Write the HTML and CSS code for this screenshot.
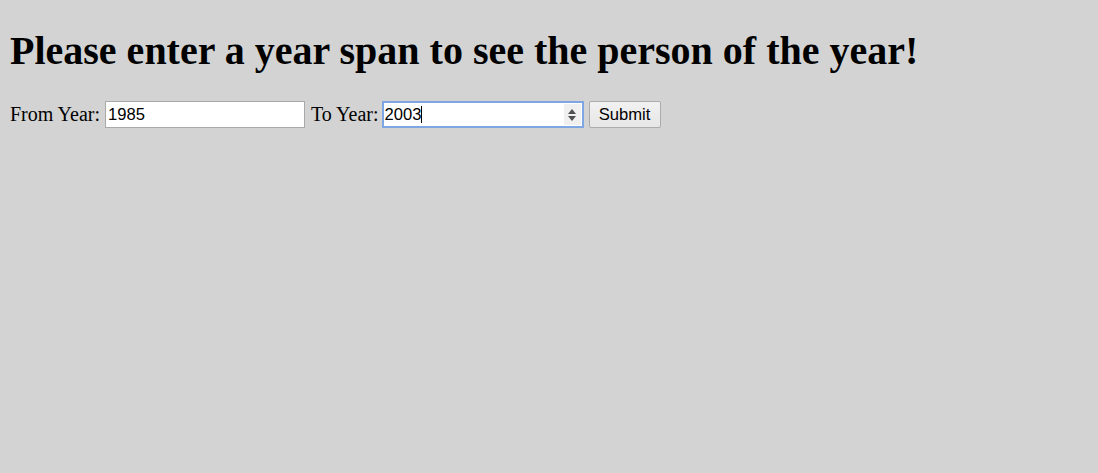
FILE: index.html
```html
<!DOCTYPE html>
<html>
<head>
<meta charset="utf-8">
<title>Person of the Year</title>
<link rel="stylesheet" href="styles.css">
</head>
<body>
<h1 class="title">Please enter a year span to see the person of the year!</h1>
<form class="year-form">
  <label class="label" for="from">From Year:</label>
  <input class="field" id="from" type="text" value="1985">
  <label class="label label-to" for="to">To Year:</label>
  <span class="field-wrap">
    <input class="field field-focus" id="to" type="text" value="2003">
    <span class="caret"></span>
    <span class="spinner">
      <svg width="10" height="14" viewBox="0 0 10 14"><path d="M5 1 L9 6 L1 6 Z" fill="#505050"/><path d="M1 8 L9 8 L5 13 Z" fill="#505050"/></svg>
    </span>
  </span>
  <button class="submit" type="button">Submit</button>
</form>
</body>
</html>
```

FILE: styles.css
```css
html, body {
  background: #d3d3d3;
}
body {
  margin: 10px;
  font-family: "Liberation Serif", "Times New Roman", serif;
  font-size: 20px;
  color: #000;
}
.title {
  font-size: 40px;
  font-weight: bold;
  margin: 18px 0 27px 0;
  line-height: 46px;
}
.year-form {
  display: flex;
  align-items: center;
  height: 27px;
  margin-top: 27px;
}
.label {
  margin-right: 5px;
  line-height: 27px;
}
.label-to {
  margin-right: 3px;
}
.field {
  box-sizing: border-box;
  width: 200px;
  height: 27px;
  border: 1px solid #a9a9a9;
  background: #fff;
  padding: 1px 2px;
  font-family: "Liberation Sans", Arial, sans-serif;
  font-size: 16.6px;
  color: #000;
  margin: 0 6px 0 0;
  outline: none;
}
.field-wrap {
  position: relative;
  display: inline-block;
  height: 27px;
  margin-right: 5px;
}
.field-wrap .field {
  margin: 0;
  width: 202px;
}
.field-focus {
  border: 2px solid #7ea6e3;
  padding: 0 1px;
}
.caret {
  position: absolute;
  left: 39px;
  top: 5px;
  width: 1px;
  height: 17px;
  background: #000;
}
.spinner {
  position: absolute;
  right: 3px;
  top: 3px;
  width: 17px;
  height: 21px;
  background: #f0f0f0;
  display: flex;
  align-items: center;
  justify-content: center;
}
.submit {
  box-sizing: border-box;
  width: 72px;
  height: 27px;
  border: 1px solid #acacac;
  border-radius: 2px;
  background: linear-gradient(#f2f2f2, #e6e6e6);
  font-family: "Liberation Sans", Arial, sans-serif;
  font-size: 16.6px;
  color: #000;
  padding: 0;
}
```
